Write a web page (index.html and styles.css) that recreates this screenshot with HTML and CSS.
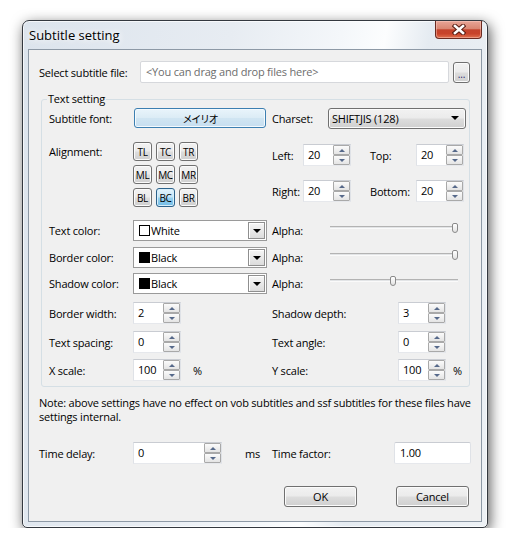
FILE: index.html
```html
<!DOCTYPE html>
<html>

<head>
    <title>Subtitle setting</title>
    <link rel="stylesheet" href="styles.css">
</head>

<body>
    <div class="window">
        <div class="titlebar">
            <span class="title">Subtitle setting</span>
            <div class="close-btn">
                <svg width="14" height="11" viewBox="0 0 14 11">
                    <path d="M3 2 L11 9 M11 2 L3 9" stroke="#5a1e14" stroke-width="4.6" stroke-linecap="square" fill="none" />
                    <path d="M3 2 L11 9 M11 2 L3 9" stroke="#ffffff" stroke-width="2.6" stroke-linecap="square" fill="none" />
                </svg>
            </div>
        </div>

        <div class="client">
            <div class="file-row">
                <span class="label file-label">Select subtitle file:</span>
                <div class="textbox file-box">&lt;You can drag and drop files here&gt;</div>
                <button class="btn browse">...</button>
            </div>

            <fieldset class="group">
                <legend>Text setting</legend>

                <div class="row font-row">
                    <div class="half-left">
                        <span class="label">Subtitle font:</span>
                        <button class="btn hot font-btn">メイリオ</button>
                    </div>
                    <div class="half-right">
                        <span class="label charset-label">Charset:</span>
                        <div class="dropdown">SHIFTJIS (128)<span class="arrow"></span></div>
                    </div>
                </div>

                <div class="row align-row">
                    <div class="half-left top">
                        <span class="label align-label">Alignment:</span>
                        <div class="align-grid">
                            <button class="btn">TL</button>
                            <button class="btn">TC</button>
                            <button class="btn">TR</button>
                            <button class="btn">ML</button>
                            <button class="btn">MC</button>
                            <button class="btn">MR</button>
                            <button class="btn">BL</button>
                            <button class="btn pressed">BC</button>
                            <button class="btn">BR</button>
                        </div>
                    </div>
                    <div class="half-right margins">
                        <div class="margin-line">
                            <span class="label m-first">Left:</span>
                            <div class="spin"><span class="val">20</span><span class="arrows"><span class="up"></span><span class="down"></span></span></div>
                            <span class="label m-second">Top:</span>
                            <div class="spin"><span class="val">20</span><span class="arrows"><span class="up"></span><span class="down"></span></span></div>
                        </div>
                        <div class="margin-line">
                            <span class="label m-first">Right:</span>
                            <div class="spin"><span class="val">20</span><span class="arrows"><span class="up"></span><span class="down"></span></span></div>
                            <span class="label m-second">Bottom:</span>
                            <div class="spin"><span class="val">20</span><span class="arrows"><span class="up"></span><span class="down"></span></span></div>
                        </div>
                    </div>
                </div>

                <div class="row color-row first">
                    <div class="half-left">
                        <span class="label">Text color:</span>
                        <div class="color-box"><span class="swatch"></span><span class="color-name">White</span><span class="combo-btn"><span class="arrow"></span></span></div>
                    </div>
                    <div class="half-right">
                        <span class="label alpha-label">Alpha:</span>
                        <div class="slider"><div class="track"></div><div class="thumb" style="left: 122px"></div></div>
                    </div>
                </div>

                <div class="row color-row second">
                    <div class="half-left">
                        <span class="label">Border color:</span>
                        <div class="color-box"><span class="swatch black"></span><span class="color-name">Black</span><span class="combo-btn"><span class="arrow"></span></span></div>
                    </div>
                    <div class="half-right">
                        <span class="label alpha-label">Alpha:</span>
                        <div class="slider"><div class="track"></div><div class="thumb" style="left: 122px"></div></div>
                    </div>
                </div>

                <div class="row color-row third">
                    <div class="half-left">
                        <span class="label">Shadow color:</span>
                        <div class="color-box"><span class="swatch black"></span><span class="color-name">Black</span><span class="combo-btn"><span class="arrow"></span></span></div>
                    </div>
                    <div class="half-right">
                        <span class="label alpha-label">Alpha:</span>
                        <div class="slider"><div class="track"></div><div class="thumb" style="left: 60px"></div></div>
                    </div>
                </div>

                <div class="row num-row first">
                    <div class="half-left">
                        <span class="label">Border width:</span>
                        <div class="spin"><span class="val">2</span><span class="arrows"><span class="up"></span><span class="down"></span></span></div>
                    </div>
                    <div class="half-right">
                        <span class="label num-label">Shadow depth:</span>
                        <div class="spin"><span class="val">3</span><span class="arrows"><span class="up"></span><span class="down"></span></span></div>
                    </div>
                </div>

                <div class="row num-row second">
                    <div class="half-left">
                        <span class="label">Text spacing:</span>
                        <div class="spin"><span class="val">0</span><span class="arrows"><span class="up"></span><span class="down"></span></span></div>
                    </div>
                    <div class="half-right">
                        <span class="label num-label">Text angle:</span>
                        <div class="spin"><span class="val">0</span><span class="arrows"><span class="up"></span><span class="down"></span></span></div>
                    </div>
                </div>

                <div class="row num-row third">
                    <div class="half-left">
                        <span class="label">X scale:</span>
                        <div class="spin"><span class="val">100</span><span class="arrows"><span class="up"></span><span class="down"></span></span></div>
                        <span class="unit left-unit">%</span>
                    </div>
                    <div class="half-right">
                        <span class="label num-label">Y scale:</span>
                        <div class="spin"><span class="val">100</span><span class="arrows"><span class="up"></span><span class="down"></span></span></div>
                        <span class="unit right-unit">%</span>
                    </div>
                </div>
            </fieldset>

            <p class="note">Note: above settings have no effect on vob subtitles and ssf subtitles for these files have<br>settings internal.</p>

            <div class="time-row">
                <span class="label time-label">Time delay:</span>
                <div class="spin wide"><span class="val">0</span><span class="arrows"><span class="up"></span><span class="down"></span></span></div>
                <span class="unit ms">ms</span>
                <span class="label factor-label">Time factor:</span>
                <div class="textbox factor-box">1.00</div>
            </div>

            <div class="buttons-row">
                <button class="btn dlg">OK</button>
                <button class="btn dlg">Cancel</button>
            </div>
        </div>
    </div>
</body>

</html>
```

FILE: styles.css
```css
body {
    margin: 0;
    background-color: #ffffff;
    color: #000000;
    font-family: "Open Sans", "Noto Sans CJK JP", sans-serif;
    font-size: 11px;
    letter-spacing: -0.2px;
}

/* window frame */
.window {
    margin: 20px 0 0 22px;
    width: 464px;
    height: 506px;
    border: 1px solid #33383f;
    border-radius: 7px 7px 5px 5px;
    background: linear-gradient(100deg, #dce4ed 0%, #e7ecf2 38%, #f4f7fa 58%, #fcfdfe 66%, #e5ebf1 74%, #edf1f5 100%);
    box-shadow: inset 0 0 0 1px rgba(255, 255, 255, 0.7), 2px 4px 14px rgba(0, 0, 0, 0.65);
    display: flex;
    flex-direction: column;
}

.titlebar {
    height: 28px;
    display: flex;
    justify-content: space-between;
    align-items: flex-start;
    padding-left: 6px;
}

.title {
    line-height: 28px;
    font-size: 13px;
    letter-spacing: 0;
    text-shadow: 0 0 6px #ffffff, 0 0 10px #ffffff;
}

.close-btn {
    width: 45px;
    height: 17px;
    margin-right: 5px;
    border: 1px solid #6a2a20;
    border-top: none;
    border-radius: 0 0 4px 4px;
    background: linear-gradient(#e8a597 0%, #d98672 45%, #c4432c 52%, #c8432a 75%, #e0714f 100%);
    box-shadow: inset 0 0 0 1px rgba(255, 210, 200, 0.45);
    display: flex;
    align-items: center;
    justify-content: center;
}

.client {
    margin: 0 5px;
    height: 460px;
    border: 1px solid #8d99a6;
    background-color: #f0f0f0;
    padding: 11px 0 0 10px;
}

.label {
    flex-shrink: 0;
}

/* common controls */
.btn {
    box-sizing: border-box;
    margin: 0;
    padding: 0;
    font-family: inherit;
    font-size: 11px;
    letter-spacing: -0.2px;
    color: #000000;
    border: 1px solid #707070;
    border-radius: 3px;
    background: linear-gradient(#f2f2f2 0%, #ebebeb 48%, #dddddd 52%, #cfcfcf 100%);
    box-shadow: inset 0 0 0 1px #fbfbfb;
}

.btn.hot {
    border-color: #3c7fb1;
    background: linear-gradient(#e9f4fb 0%, #dcecf6 48%, #d0e5f2 52%, #c6def0 100%);
    box-shadow: inset 0 0 0 1px #f4fafe;
}

.btn.pressed {
    border-color: #2c628b;
    background: linear-gradient(#e5f4fc 0%, #c4e5f6 48%, #98d1ef 52%, #72bce6 100%);
    box-shadow: inset 0 0 0 1px #d6eefb;
}

.textbox {
    box-sizing: border-box;
    height: 22px;
    line-height: 20px;
    padding-left: 5px;
    border: 1px solid;
    border-color: #c9ccd2 #dfe2e7 #e6e8ec #dfe2e7;
    border-radius: 2px;
    background-color: #ffffff;
}

.spin {
    box-sizing: border-box;
    width: 48px;
    height: 22px;
    border: 1px solid;
    border-color: #c9ccd2 #dfe2e7 #e6e8ec #dfe2e7;
    background-color: #ffffff;
    display: flex;
    flex-shrink: 0;
}

.spin.wide {
    width: 89px;
}

.spin .val {
    flex: 1;
    line-height: 19px;
    padding-left: 4px;
}

.spin .arrows {
    width: 17px;
    display: flex;
    flex-direction: column;
}

.spin .arrows span {
    flex: 1;
    border: 1px solid #a9a9a9;
    border-radius: 1px;
    background: linear-gradient(#fbfbfb, #e4e4e4);
    display: flex;
    align-items: center;
    justify-content: center;
}

.spin .up::after {
    content: "";
    border-left: 3px solid transparent;
    border-right: 3px solid transparent;
    border-bottom: 3px solid #56698a;
}

.spin .down::after {
    content: "";
    border-left: 3px solid transparent;
    border-right: 3px solid transparent;
    border-top: 3px solid #56698a;
}

.arrow {
    width: 0;
    height: 0;
    border-left: 4px solid transparent;
    border-right: 4px solid transparent;
    border-top: 4px solid #000000;
}

/* file row */
.file-row {
    display: flex;
    align-items: center;
    height: 22px;
}

.file-label {
    width: 101px;
}

.file-box {
    width: 309px;
    color: #6d6d6d;
    border-color: #d6d8dc;
}

.browse {
    margin-left: 4px;
    width: 17px;
    height: 21px;
    line-height: 22px;
    font-size: 10px;
    color: #2a2a6e;
}

/* group box */
.group {
    margin: 9px 0 0 2px;
    padding: 0 0 5px 7px;
    width: 420px;
    min-width: 0;
    border: 1px solid #d5dfe5;
    border-radius: 3px;
}

.group legend {
    margin-left: -2px;
    padding: 0 1px;
    line-height: 14px;
}

.row {
    display: flex;
}

.half-left {
    width: 223px;
    display: flex;
    align-items: center;
}

.half-left .label {
    width: 84px;
}

.half-right {
    flex: 1;
    display: flex;
    align-items: center;
}

.font-row {
    margin-top: 2px;
    height: 20px;
}

.font-btn {
    margin-left: 1px;
    width: 132px;
    height: 20px;
    font-size: 10px;
    letter-spacing: -1.2px;
}

.charset-label {
    width: 56px;
}

.dropdown {
    box-sizing: border-box;
    width: 138px;
    height: 21px;
    padding: 0 6px 0 3px;
    border: 1px solid #707070;
    border-radius: 3px;
    background: linear-gradient(#f2f2f2 0%, #ebebeb 48%, #dddddd 52%, #cfcfcf 100%);
    box-shadow: inset 0 0 0 1px #fbfbfb;
    display: flex;
    align-items: center;
    justify-content: space-between;
}

/* alignment */
.align-row {
    margin-top: 14px;
    height: 65px;
}

.half-left.top {
    align-items: flex-start;
}

.align-label {
    line-height: 19px;
}

.align-grid {
    display: grid;
    grid-template-columns: repeat(3, 19px);
    grid-auto-rows: 19px;
    column-gap: 4px;
    row-gap: 4px;
}

.align-grid .btn {
    font-size: 10px;
    letter-spacing: -0.3px;
}

.margins {
    flex-direction: column;
    align-items: flex-start;
    padding-top: 2px;
    gap: 14px;
}

.margin-line {
    display: flex;
    align-items: center;
}

.m-first {
    width: 31px;
}

.m-second {
    width: 46px;
    margin-left: 19px;
}

/* color rows */
.color-row {
    height: 21px;
}

.color-row.first {
    margin-top: 13px;
}

.color-row.second {
    margin-top: 6px;
}

.color-row.third {
    margin-top: 5px;
}

.color-box {
    box-sizing: border-box;
    width: 134px;
    height: 21px;
    border: 1px solid #9a9a9a;
    background-color: #ffffff;
    display: flex;
    align-items: center;
}

.swatch {
    box-sizing: border-box;
    width: 11px;
    height: 11px;
    margin: 0 1px 0 5px;
    border: 1px solid #000000;
}

.swatch.black {
    background-color: #000000;
}

.color-name {
    flex: 1;
}

.combo-btn {
    box-sizing: border-box;
    width: 17px;
    align-self: stretch;
    margin: 1px;
    border: 1px solid #8f8f8f;
    background: linear-gradient(#f6f6f6, #dcdcdc);
    box-shadow: inset 1px 1px 0 #ffffff;
    display: flex;
    align-items: center;
    justify-content: center;
}

.alpha-label {
    width: 58px;
}

.slider {
    position: relative;
    width: 128px;
    height: 21px;
}

.track {
    position: absolute;
    top: 6px;
    left: 0;
    right: 0;
    height: 1px;
    border-top: 1px solid #b3b3b3;
    border-bottom: 1px solid #fafafa;
    background-color: #e2e4e6;
}

.thumb {
    position: absolute;
    top: 3px;
    box-sizing: border-box;
    width: 6px;
    height: 10px;
    border: 1px solid #8a8a8a;
    border-radius: 2px 2px 3px 3px;
    background: linear-gradient(#ffffff, #e2e2e2);
}

/* number rows */
.num-row {
    height: 22px;
}

.num-row.first {
    margin-top: 8px;
}

.num-row.second {
    margin-top: 7px;
}

.num-row.third {
    margin-top: 6px;
}

.num-label {
    width: 126px;
}

.left-unit {
    margin-left: 12px;
}

.right-unit {
    margin-left: 7px;
}

/* bottom part */
.note {
    margin: 9px 0 0 0;
    line-height: 14px;
}

.time-row {
    margin-top: 18px;
    display: flex;
    align-items: center;
    height: 22px;
}

.time-label {
    width: 94px;
}

.ms {
    width: 27px;
    padding-left: 23px;
}

.factor-label {
    width: 122px;
}

.factor-box {
    width: 77px;
}

.buttons-row {
    margin-top: 22px;
    padding-right: 12px;
    display: flex;
    justify-content: flex-end;
    gap: 39px;
}

.btn.dlg {
    width: 73px;
    height: 21px;
}
```
